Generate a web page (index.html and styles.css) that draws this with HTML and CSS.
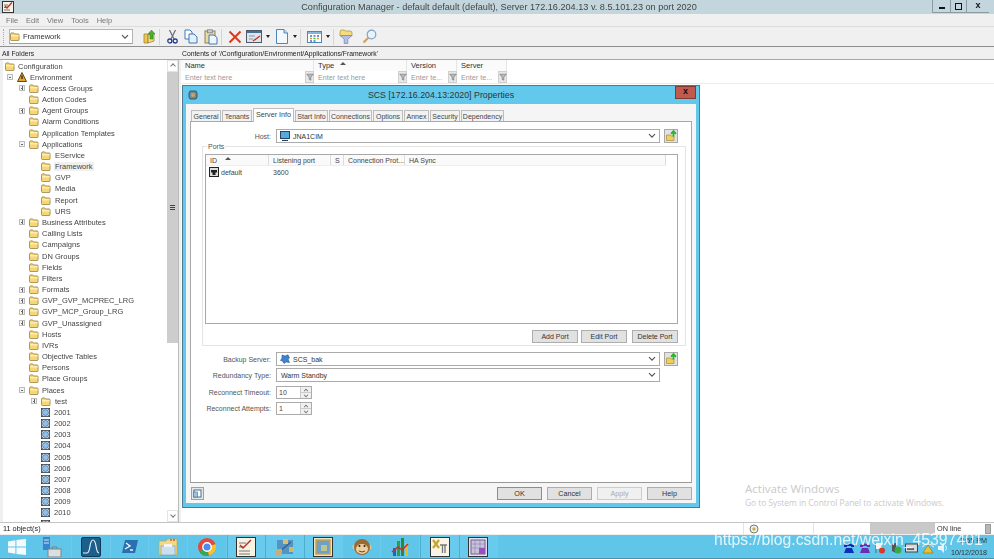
FILE: index.html
```html
<!DOCTYPE html>
<html lang="en">
<head>
<meta charset="utf-8">
<title>Configuration Manager</title>
<link rel="stylesheet" href="styles.css">
</head>
<body>
<svg class="defs" width="0" height="0">
  <defs>
    <symbol id="folder" viewBox="0 0 11 10">
      <path d="M.5 2.5 Q.5 1 2 1 H4 L5 2.2 H9 Q10 2.2 10 3.2 V8.5 Q10 9.5 9 9.5 H2 Q.5 9.5 .5 8.5 Z" fill="#f7d774" stroke="#8a7436" stroke-width=".8"/>
      <path d="M1.2 4.2 H9.6" stroke="#fff3c0" stroke-width="1.4"/>
    </symbol>
    <symbol id="place" viewBox="0 0 10 10">
      <rect x=".5" y=".5" width="9" height="9" fill="#d5dde4" stroke="#45525e"/>
      <circle cx="5" cy="5" r="3.3" fill="#8fc0ea" stroke="#3f6d96" stroke-width=".7"/>
      <path d="M0 0 L2 2 M10 0 L8 2 M0 10 L2 8 M10 10 L8 8" stroke="#333" stroke-width=".8"/>
    </symbol>
    <symbol id="funnel" viewBox="0 0 10 10">
      <path d="M1 1.5 H9 L6 5.2 V9 L4 8 V5.2 Z" fill="#b8bcc0" stroke="#666" stroke-width=".7"/>
    </symbol>
    <symbol id="newfolder" viewBox="0 0 14 14">
      <rect x=".5" y=".5" width="13" height="13" fill="#e3e3e3" stroke="#a8a8a8"/>
      <path d="M2.5 6 H6 L7 7 H10 V11.5 H2.5 Z" fill="#f3cf55" stroke="#96802f" stroke-width=".6"/>
      <path d="M9.5 2 V7.5 M7 4.8 L9.5 2 L12 4.8" fill="none" stroke="#27b531" stroke-width="1.8"/>
    </symbol>
    <symbol id="chev" viewBox="0 0 8 6">
      <path d="M1 1.2 L4 4.2 L7 1.2" fill="none" stroke="#555" stroke-width="1.2"/>
    </symbol>
  </defs>
</svg>

<div class="app">
  <header class="titlebar">
    <svg class="app-icon" width="12" height="12" viewBox="0 0 12 12"><rect x=".5" y=".5" width="11" height="11" fill="#f6f3e6" stroke="#333"/><path d="M2 4 H6 M2 6.5 H5 M2 9 H8" stroke="#777"/><path d="M3 5 L5 7 L10 1.5" fill="none" stroke="#b8322a" stroke-width="1.3"/></svg>
    <div class="title">Configuration Manager - default default (default), Server 172.16.204.13 v. 8.5.101.23 on port 2020</div>
    <div class="winctl">
      <span class="winbtn min"><i></i></span>
      <span class="winbtn max"><i></i></span>
      <span class="winbtn close">x</span>
    </div>
  </header>

  <nav class="menubar"><span>File</span><span>Edit</span><span>View</span><span>Tools</span><span>Help</span></nav>

  <div class="toolbar">
    <span class="grip"></span>
    <div class="combo tb-combo">
      <svg width="10" height="9"><use href="#folder"/></svg>
      <span class="combo-text">Framework</span>
      <svg class="chev" width="8" height="6"><use href="#chev"/></svg>
    </div>
    <svg class="tb t-up" width="13" height="15" viewBox="0 0 13 15"><path d="M1 5 H5 V14 H1 Z" fill="#f0c850" stroke="#8d7530" stroke-width=".7"/><path d="M5 6 L11 4 V12 L5 14 Z" fill="#f8dc78" stroke="#8d7530" stroke-width=".7"/><path d="M8.5 1 L12 5 H10 V10 H7 V5 H5 Z" fill="#4fae2c" stroke="#2f7c18" stroke-width=".5"/></svg>
    <i class="sep s1"></i>
    <svg class="tb t-cut" width="11" height="15" viewBox="0 0 11 15"><path d="M2.5 1 L7 10 M8.5 1 L4 10" stroke="#6d7379" stroke-width="1.3"/><circle cx="2.8" cy="12" r="2" fill="none" stroke="#24408a" stroke-width="1.3"/><circle cx="8.2" cy="12" r="2" fill="none" stroke="#24408a" stroke-width="1.3"/></svg>
    <svg class="tb t-copy" width="14" height="15" viewBox="0 0 14 15"><path d="M1 1 H6 L8 3 V10 H1 Z" fill="#fff" stroke="#3f78b5"/><path d="M5 5 H10 L13 8 V14 H5 Z" fill="#e4f0fa" stroke="#3f78b5"/></svg>
    <svg class="tb t-paste" width="14" height="16" viewBox="0 0 14 16"><rect x="1" y="2" width="10" height="12" fill="#ead9a9" stroke="#8d8152"/><rect x="3.5" y=".8" width="5" height="3" fill="#ccc" stroke="#777" stroke-width=".7"/><path d="M5 6 H10 L13 8.5 V15 H5 Z" fill="#eef5fb" stroke="#3f78b5"/></svg>
    <i class="sep s2"></i>
    <svg class="tb t-x" width="14" height="14" viewBox="0 0 14 14"><path d="M1.5 1.5 L12.5 12.5 M12.5 1.5 L1.5 12.5" stroke="#dd3a1e" stroke-width="2"/></svg>
    <svg class="tb t-prop" width="16" height="13" viewBox="0 0 16 13"><rect x=".5" y=".5" width="15" height="12" fill="#dfe4ea" stroke="#4a5a6a"/><rect x="1" y="1" width="14" height="2" fill="#4a6f95"/><path d="M3 6 H9 M3 9 H7" stroke="#8899aa"/><path d="M7 11 L14 6" stroke="#c9352a" stroke-width="1.4"/></svg>
    <i class="drop d1"></i>
    <svg class="tb t-doc" width="12" height="15" viewBox="0 0 12 15"><path d="M.5 .5 H8 L11.5 4 V14.5 H.5 Z" fill="#f3f8fd" stroke="#4b86bd"/><path d="M8 .5 V4 H11.5" fill="#cfe2f3" stroke="#4b86bd"/></svg>
    <i class="drop d2"></i>
    <i class="sep s3"></i>
    <svg class="tb t-view" width="15" height="12" viewBox="0 0 15 12"><rect x=".5" y=".5" width="14" height="11" fill="#fff" stroke="#4b86bd"/><rect x="1" y="1" width="13" height="2" fill="#8ab4dc"/><path d="M3 5 H5 M6.5 5 H8.5 M10 5 H12" stroke="#3f78b5" stroke-width="1.4"/><path d="M3 7.5 H5 M10 7.5 H12" stroke="#dd9a2c" stroke-width="1.4"/><path d="M6.5 7.5 H8.5" stroke="#4fae2c" stroke-width="1.4"/><path d="M3 10 H5 M6.5 10 H8.5" stroke="#3f78b5" stroke-width="1.4"/></svg>
    <i class="drop d3"></i>
    <i class="sep s4"></i>
    <svg class="tb t-filter" width="14" height="15" viewBox="0 0 14 15"><path d="M1 3 Q1 1 3 1 H5.500 L6.500 2 H11 Q13 2 13 4 V7 H1 Z" fill="#f6dc7c" stroke="#a58f3c" stroke-width=".7"/><path d="M1.500 6.500 H12.500 L8.800 10.500 V14.500 H5.200 V10.500 Z" fill="#b4bfea" stroke="#7283b0" stroke-width=".7"/></svg>
    <svg class="tb t-find" width="15" height="15" viewBox="0 0 15 15"><circle cx="9.5" cy="5.5" r="4.3" fill="#e8f3fb" stroke="#77a8cf" stroke-width="1.2"/><path d="M6.3 8.7 L1.5 13.5" stroke="#d0a260" stroke-width="2.2"/></svg>
  </div>

  <div class="captions">
    <div class="cap-left">All Folders</div>
    <div class="cap-right">Contents of '/Configuration/Environment/Applications/Framework'</div>
  </div>

  <main class="workspace">
    <section class="tree-pane">
      <ul class="tree">
        <li class="l0"><i class="noexp"></i><svg class="ico" width="10" height="9"><use href="#folder"/></svg><span>Configuration</span></li>
        <li class="l1"><i class="exp minus"></i><svg class="ico" width="10" height="10" viewBox="0 0 10 10"><path d="M5 .5 L9.5 9.5 H.5 Z" fill="#e9a324" stroke="#3a2a10" stroke-width=".8"/><path d="M5 3.5 V7" stroke="#222" stroke-width="1.3"/></svg><span>Environment</span></li>
        <li class="l2"><i class="exp plus"></i><svg class="ico" width="10" height="9"><use href="#folder"/></svg><span>Access Groups</span></li>
        <li class="l2"><i class="noexp"></i><svg class="ico" width="10" height="9"><use href="#folder"/></svg><span>Action Codes</span></li>
        <li class="l2"><i class="exp plus"></i><svg class="ico" width="10" height="9"><use href="#folder"/></svg><span>Agent Groups</span></li>
        <li class="l2"><i class="noexp"></i><svg class="ico" width="10" height="9"><use href="#folder"/></svg><span>Alarm Conditions</span></li>
        <li class="l2"><i class="noexp"></i><svg class="ico" width="10" height="9"><use href="#folder"/></svg><span>Application Templates</span></li>
        <li class="l2"><i class="exp minus"></i><svg class="ico" width="10" height="9"><use href="#folder"/></svg><span>Applications</span></li>
        <li class="l3"><i class="noexp"></i><svg class="ico" width="10" height="9"><use href="#folder"/></svg><span>EService</span></li>
        <li class="l3"><i class="noexp"></i><svg class="ico" width="10" height="9"><use href="#folder"/></svg><span class="selected">Framework</span></li>
        <li class="l3"><i class="noexp"></i><svg class="ico" width="10" height="9"><use href="#folder"/></svg><span>GVP</span></li>
        <li class="l3"><i class="noexp"></i><svg class="ico" width="10" height="9"><use href="#folder"/></svg><span>Media</span></li>
        <li class="l3"><i class="noexp"></i><svg class="ico" width="10" height="9"><use href="#folder"/></svg><span>Report</span></li>
        <li class="l3"><i class="noexp"></i><svg class="ico" width="10" height="9"><use href="#folder"/></svg><span>URS</span></li>
        <li class="l2"><i class="exp plus"></i><svg class="ico" width="10" height="9"><use href="#folder"/></svg><span>Business Attributes</span></li>
        <li class="l2"><i class="noexp"></i><svg class="ico" width="10" height="9"><use href="#folder"/></svg><span>Calling Lists</span></li>
        <li class="l2"><i class="noexp"></i><svg class="ico" width="10" height="9"><use href="#folder"/></svg><span>Campaigns</span></li>
        <li class="l2"><i class="noexp"></i><svg class="ico" width="10" height="9"><use href="#folder"/></svg><span>DN Groups</span></li>
        <li class="l2"><i class="noexp"></i><svg class="ico" width="10" height="9"><use href="#folder"/></svg><span>Fields</span></li>
        <li class="l2"><i class="noexp"></i><svg class="ico" width="10" height="9"><use href="#folder"/></svg><span>Filters</span></li>
        <li class="l2"><i class="exp plus"></i><svg class="ico" width="10" height="9"><use href="#folder"/></svg><span>Formats</span></li>
        <li class="l2"><i class="exp plus"></i><svg class="ico" width="10" height="9"><use href="#folder"/></svg><span>GVP_GVP_MCPREC_LRG</span></li>
        <li class="l2"><i class="exp plus"></i><svg class="ico" width="10" height="9"><use href="#folder"/></svg><span>GVP_MCP_Group_LRG</span></li>
        <li class="l2"><i class="exp plus"></i><svg class="ico" width="10" height="9"><use href="#folder"/></svg><span>GVP_Unassigned</span></li>
        <li class="l2"><i class="noexp"></i><svg class="ico" width="10" height="9"><use href="#folder"/></svg><span>Hosts</span></li>
        <li class="l2"><i class="noexp"></i><svg class="ico" width="10" height="9"><use href="#folder"/></svg><span>IVRs</span></li>
        <li class="l2"><i class="noexp"></i><svg class="ico" width="10" height="9"><use href="#folder"/></svg><span>Objective Tables</span></li>
        <li class="l2"><i class="noexp"></i><svg class="ico" width="10" height="9"><use href="#folder"/></svg><span>Persons</span></li>
        <li class="l2"><i class="noexp"></i><svg class="ico" width="10" height="9"><use href="#folder"/></svg><span>Place Groups</span></li>
        <li class="l2"><i class="exp minus"></i><svg class="ico" width="10" height="9"><use href="#folder"/></svg><span>Places</span></li>
        <li class="l3"><i class="exp plus"></i><svg class="ico" width="10" height="9"><use href="#folder"/></svg><span>test</span></li>
        <li class="l3"><i class="noexp"></i><svg class="ico" width="9" height="9"><use href="#place"/></svg><span>2001</span></li>
        <li class="l3"><i class="noexp"></i><svg class="ico" width="9" height="9"><use href="#place"/></svg><span>2002</span></li>
        <li class="l3"><i class="noexp"></i><svg class="ico" width="9" height="9"><use href="#place"/></svg><span>2003</span></li>
        <li class="l3"><i class="noexp"></i><svg class="ico" width="9" height="9"><use href="#place"/></svg><span>2004</span></li>
        <li class="l3"><i class="noexp"></i><svg class="ico" width="9" height="9"><use href="#place"/></svg><span>2005</span></li>
        <li class="l3"><i class="noexp"></i><svg class="ico" width="9" height="9"><use href="#place"/></svg><span>2006</span></li>
        <li class="l3"><i class="noexp"></i><svg class="ico" width="9" height="9"><use href="#place"/></svg><span>2007</span></li>
        <li class="l3"><i class="noexp"></i><svg class="ico" width="9" height="9"><use href="#place"/></svg><span>2008</span></li>
        <li class="l3"><i class="noexp"></i><svg class="ico" width="9" height="9"><use href="#place"/></svg><span>2009</span></li>
        <li class="l3"><i class="noexp"></i><svg class="ico" width="9" height="9"><use href="#place"/></svg><span>2010</span></li>
        <li class="l3"><i class="noexp"></i><svg class="ico" width="9" height="9"><use href="#place"/></svg></li>
      </ul>
      <div class="vscroll">
        <span class="arrow up"></span>
        <div class="thumb"><i></i></div>
        <div class="track"></div>
        <span class="arrow down"></span>
      </div>
    </section>
    <section class="list-pane">
      <div class="col-heads">
        <div class="ch c-name">Name</div>
        <div class="ch c-type">Type<i class="sort"></i></div>
        <div class="ch c-ver">Version</div>
        <div class="ch c-srv">Server</div>
      </div>
      <div class="col-filters">
        <div class="cf c-name"><span>Enter text here</span><b><svg width="8" height="8"><use href="#funnel"/></svg></b></div>
        <div class="cf c-type"><span>Enter text here</span><b><svg width="8" height="8"><use href="#funnel"/></svg></b></div>
        <div class="cf c-ver"><span>Enter te...</span><b><svg width="8" height="8"><use href="#funnel"/></svg></b></div>
        <div class="cf c-srv"><span>Enter te...</span><b><svg width="8" height="8"><use href="#funnel"/></svg></b></div>
      </div>
      <div class="activate">
        <div class="act-1">Activate Windows</div>
        <div class="act-2">Go to System in Control Panel to activate Windows.</div>
      </div>
    </section>

    <div class="dialog">
      <div class="dlg-title">
        <svg class="dlg-icon" width="10" height="10" viewBox="0 0 10 10"><path d="M2 1 H8 L9 3 V7 L8 9 H2 L1 7 V3 Z" fill="#6d8aa5" stroke="#2f3f50" stroke-width=".8"/><circle cx="5" cy="5" r="2" fill="#c8a94c"/></svg>
        <div class="dlg-name">SCS [172.16.204.13:2020] Properties</div>
        <div class="dlg-close">x</div>
      </div>
      <div class="dlg-body">
        <div class="tabs">
          <span class="tab t-general">General</span>
          <span class="tab t-tenants">Tenants</span>
          <span class="tab active t-server">Server Info</span>
          <span class="tab t-start">Start Info</span>
          <span class="tab t-conn">Connections</span>
          <span class="tab t-opt">Options</span>
          <span class="tab t-annex">Annex</span>
          <span class="tab t-sec">Security</span>
          <span class="tab t-dep">Dependency</span>
        </div>
        <div class="pane">
          <div class="frow host-row">
            <label class="flabel">Host:</label>
            <div class="combo fcombo">
              <svg width="10" height="10" viewBox="0 0 10 10"><rect x=".5" y=".5" width="9" height="7" fill="#5aa6de" stroke="#26435f"/><path d="M2 9.5 H8" stroke="#26435f" stroke-width="1.2"/></svg>
              <span class="combo-text">JNA1CIM</span>
              <svg class="chev" width="8" height="6"><use href="#chev"/></svg>
            </div>
            <svg class="addbtn" width="14" height="14"><use href="#newfolder"/></svg>
          </div>

          <div class="group">
            <span class="legend">Ports</span>
            <div class="ports">
              <div class="phead">
                <div class="pc p-id">ID<i class="sort"></i></div>
                <div class="pc p-port">Listening port</div>
                <div class="pc p-s">S</div>
                <div class="pc p-conn">Connection Prot...</div>
                <div class="pc p-ha">HA Sync</div>
              </div>
              <div class="prow">
                <div class="p-id cell-id">
                  <svg width="10" height="10" viewBox="0 0 10 10"><rect x=".5" y=".5" width="9" height="9" fill="#ddd" stroke="#222"/><path d="M2 3 H8 V5.5 H6.5 V8 H3.5 V5.5 H2 Z" fill="#222"/></svg>
                  <span>default</span>
                </div>
                <div class="p-port cell-port">3600</div>
              </div>
            </div>
            <div class="port-btns">
              <button class="btn b-add">Add Port</button>
              <button class="btn b-edit">Edit Port</button>
              <button class="btn b-del">Delete Port</button>
            </div>
          </div>

          <div class="frow backup-row">
            <label class="flabel">Backup Server:</label>
            <div class="combo fcombo">
              <svg width="10" height="10" viewBox="0 0 10 10"><path d="M2 1 L5 2 L8 .8 L9.5 4 L8 5 L9.5 8.5 L6 8 L4 9.5 L2.5 7 L.5 6.5 L2 4 Z" fill="#3f83d0" stroke="#23466f" stroke-width=".5"/></svg>
              <span class="combo-text">SCS_bak</span>
              <svg class="chev" width="8" height="6"><use href="#chev"/></svg>
            </div>
            <svg class="addbtn" width="14" height="14"><use href="#newfolder"/></svg>
          </div>
          <div class="frow red-row">
            <label class="flabel">Redundancy Type:</label>
            <div class="combo fcombo">
              <span class="combo-text plain">Warm Standby</span>
              <svg class="chev" width="8" height="6"><use href="#chev"/></svg>
            </div>
          </div>
          <div class="frow spin-row s-first">
            <label class="flabel">Reconnect Timeout:</label>
            <div class="spin"><span class="spin-val">10</span><span class="spin-btns"><i class="sup"></i><i class="sdn"></i></span></div>
          </div>
          <div class="frow spin-row">
            <label class="flabel">Reconnect Attempts:</label>
            <div class="spin"><span class="spin-val">1</span><span class="spin-btns"><i class="sup"></i><i class="sdn"></i></span></div>
          </div>
        </div>
        <div class="dlg-foot">
          <svg class="foot-icon" width="13" height="13" viewBox="0 0 13 13"><rect x=".5" y=".5" width="12" height="12" fill="#e6e6e6" stroke="#8aa"/><rect x="3" y="3" width="7" height="7" fill="#fff" stroke="#3f6d96"/><rect x="2.5" y="5" width="4" height="5" fill="#9cc3e6" stroke="#3f6d96" stroke-width=".6"/></svg>
          <button class="btn fbtn default">OK</button>
          <button class="btn fbtn">Cancel</button>
          <button class="btn fbtn disabled">Apply</button>
          <button class="btn fbtn">Help</button>
        </div>
      </div>
    </div>
  </main>

  <footer class="statusbar">
    <div class="st-text">11 object(s)</div>
    <div class="st-seg st-a"><svg width="10" height="10" viewBox="0 0 10 10"><circle cx="5" cy="5" r="4" fill="#f3f3ea" stroke="#777"/><circle cx="5" cy="5" r="1.7" fill="#c3b150"/></svg></div>
    <div class="st-seg st-b"></div>
    <div class="st-gray"></div>
    <div class="st-online">ON line</div>
    <div class="st-end"></div>
  </footer>

  <footer class="taskbar">
    <span class="tk start"><svg width="18" height="16" viewBox="0 0 18 16"><path d="M0 2.4 L7.4 1.3 V7.5 H0 Z M8.4 1.1 L18 0 V7.5 H8.4 Z M0 8.5 H7.4 V14.7 L0 13.6 Z M8.4 8.5 H18 V16 L8.4 14.9 Z" fill="#f4fbfe"/></svg></span>
    <span class="tk"><svg width="20" height="20" viewBox="0 0 20 20"><rect x="1" y="0" width="7" height="13" fill="#3a84cf"/><path d="M2 3 H7 M2 6 H7" stroke="#cfe6f8"/><rect x="6" y="12" width="13" height="8" fill="#dcdfe2" stroke="#7a8288"/><path d="M10 12 V10 H15 V12" fill="none" stroke="#7a8288"/></svg></span>
    <span class="tk"><svg width="20" height="20" viewBox="0 0 20 20"><rect x=".5" y=".5" width="19" height="19" rx="1.5" fill="#1c5f8c" stroke="#123a58"/><path d="M2 16 H6 Q8 16 9 9 Q10 3 12 3 Q14 3 15 9 Q16 16 18 16" fill="none" stroke="#e3f2f9" stroke-width="1.2"/></svg></span>
    <span class="tk"><svg width="18" height="15" viewBox="0 0 18 15"><path d="M4 1 H17 L14 14 H1 Z" fill="#2a6fb0"/><path d="M5 4 L9 7 L4 10 M9 11 H12" fill="none" stroke="#eef7fd" stroke-width="1.4"/></svg></span>
    <span class="tk"><svg width="20" height="18" viewBox="0 0 20 18"><path d="M1 3 H8 L9.5 1 H19 V17 H1 Z" fill="#f4d77f" stroke="#b59a4b" stroke-width=".6"/><path d="M12 2 H14 M15 2 H17" stroke="#dd5040" stroke-width="1.4"/><rect x="3" y="8" width="14" height="9" fill="#c9e0ee" stroke="#7a99ad" stroke-width=".6"/><rect x="6" y="6" width="8" height="3" fill="#f4f4f4"/></svg></span>
    <span class="tk"><svg width="18" height="18" viewBox="0 0 18 18"><circle cx="9" cy="9" r="9" fill="#e24a3b"/><path d="M9 9 L1.2 13.5 A9 9 0 0 0 11 17.8 Z" fill="#34a853"/><path d="M9 9 L17.5 6 A9 9 0 0 1 11 17.8 Z" fill="#fbc02d"/><circle cx="9" cy="9" r="4.2" fill="#4a8df0" stroke="#fff" stroke-width="1.4"/></svg></span>
    <span class="tk boxed"><svg width="20" height="20" viewBox="0 0 20 20"><rect x=".5" y=".5" width="19" height="19" fill="#f7f3e3" stroke="#33302a"/><path d="M3 6 H10 M3 10 H8 M3 14 H14 M3 17 H14" stroke="#777"/><path d="M4 8 L7 11 L15 3" fill="none" stroke="#b8322a" stroke-width="1.5"/></svg></span>
    <span class="tk boxed"><svg width="18" height="18" viewBox="0 0 18 18"><rect x="1" y="2" width="16" height="14" fill="#4f86b8" opacity=".8"/><path d="M3 14 L9 9 L15 4" stroke="#3d5f7a" stroke-width="1.2"/><rect x="7" y="1" width="5" height="5" fill="#d8c078"/><rect x="0" y="11" width="6" height="6" fill="#c3b078"/><rect x="13" y="9" width="5" height="5" fill="#cfb86a"/></svg></span>
    <span class="tk boxed"><svg width="20" height="20" viewBox="0 0 20 20"><rect x=".5" y=".5" width="19" height="19" fill="#f1e5c0" stroke="#333"/><rect x="3" y="3" width="14" height="14" fill="#6f9fcb" stroke="#c9a24a" stroke-width="1.5"/><rect x="8" y="8" width="6" height="6" fill="#b7c98a"/></svg></span>
    <span class="tk"><svg width="20" height="18" viewBox="0 0 20 18"><circle cx="3" cy="9" r="2.5" fill="#e8c28e"/><circle cx="17" cy="9" r="2.5" fill="#e8c28e"/><circle cx="10" cy="9" r="8" fill="#9a6a34"/><ellipse cx="10" cy="11" rx="6" ry="5" fill="#efcfa0"/><circle cx="7.5" cy="8" r="1" fill="#222"/><circle cx="12.5" cy="8" r="1" fill="#222"/><path d="M7 13 Q10 15 13 13" fill="none" stroke="#6b4420"/></svg></span>
    <span class="tk"><svg width="18" height="20" viewBox="0 0 18 20"><rect x="2" y="11" width="3" height="8" fill="#2a5fc0"/><rect x="6" y="4" width="3" height="15" fill="#2f9e44"/><rect x="10" y="1" width="3" height="18" fill="#2c8a3a"/><rect x="14" y="6" width="3" height="13" fill="#e7b92c"/><path d="M1 15 L7 10 L11 13 L17 7" fill="none" stroke="#d22a25" stroke-width="1.5"/></svg></span>
    <span class="tk boxed"><svg width="20" height="20" viewBox="0 0 20 20"><rect x=".5" y=".5" width="19" height="19" fill="#f8f4e6" stroke="#333"/><path d="M3 3 L9 11 M9 3 L3 11" stroke="#c9a52c" stroke-width="2.2"/><path d="M10 8 H17 M12.5 8 V16 M15 8 V16" stroke="#777" stroke-width="1.3"/></svg></span>
    <span class="tk boxed"><svg width="20" height="20" viewBox="0 0 20 20"><rect x=".5" y=".5" width="19" height="19" fill="#e4e0ee" stroke="#333"/><rect x="3" y="3" width="14" height="14" fill="#c9c3dc" stroke="#6b6290"/><path d="M3 7 H17 M3 11 H17 M7 3 V17 M12 3 V17" stroke="#8f86b0" stroke-width=".7"/><rect x="11" y="11" width="6" height="6" fill="#9a4fc0"/></svg></span>
    <div class="tray">
      <svg width="12" height="12" viewBox="0 0 12 12"><path d="M1 3 Q6 0 11 3 V5 H8 V4 H4 V5 H1 Z M3 6 H9 L11 11 H1 Z" fill="#0e2fb8"/></svg>
      <svg width="12" height="12" viewBox="0 0 12 12"><path d="M1 3 Q6 0 11 3 V5 H8 V4 H4 V5 H1 Z M3 6 H9 L11 11 H1 Z" fill="#6a2fb5"/></svg>
      <svg width="12" height="12" viewBox="0 0 12 12"><path d="M2 1 V11" stroke="#666"/><path d="M2 1 H9 L7 4 L9 7 H2 Z" fill="#f3f3f3"/><circle cx="8" cy="8.5" r="3" fill="#d53a2c"/></svg>
      <svg width="12" height="12" viewBox="0 0 12 12"><path d="M2 2 L6 1 V11 L2 9 Z" fill="#555"/><circle cx="8" cy="8" r="3.5" fill="#39a845"/></svg>
      <svg width="13" height="12" viewBox="0 0 13 12"><rect x=".5" y="2" width="12" height="8" fill="#d6dadd" stroke="#444"/><path d="M2 7 H9" stroke="#333" stroke-width="1.4"/></svg>
      <svg width="12" height="12" viewBox="0 0 12 12"><path d="M0 5 Q6 -1 12 5" fill="none" stroke="#e3f3fa"/><path d="M6 3 L11 11 H1 Z" fill="#edc132" stroke="#7a6010" stroke-width=".5"/></svg>
      <svg width="12" height="12" viewBox="0 0 12 12"><path d="M1 4 H4 L7 1 V11 L4 8 H1 Z" fill="#e3f3fa"/><path d="M8.5 3.5 Q10.5 6 8.5 8.5" fill="none" stroke="#e3f3fa"/></svg>
    </div>
    <div class="clock"><div>2:55 PM</div><div>10/12/2018</div></div>
    <div class="watermark">https://blog.csdn.net/weixin_45397401</div>
  </footer>
</div>
</body>
</html>
```
FILE: styles.css
```css
* { box-sizing: border-box; }
html, body { margin: 0; padding: 0; height: 100%; }
body { background: #fff; overflow: hidden; font-family: "Liberation Sans", Arial, sans-serif; font-size: 7.5px; color: #333; }
.defs { position: absolute; }
button { font-family: inherit; }

.app { width: 994px; height: 559px; display: flex; flex-direction: column; position: relative; filter: blur(.45px); }

/* title */
.titlebar { height: 14px; background: #c3d6dd; display: flex; align-items: center; position: relative; flex: none; }
.app-icon { margin-left: 2px; flex: none; }
.title { position: absolute; left: 0; right: 0; padding-left: 4px; text-align: center; font-size: 9.15px; color: #444; white-space: nowrap; }
.winctl { margin-left: auto; margin-right: 5px; display: flex; height: 13px; align-self: flex-start; border: 1px solid #8a9ba2; border-top: 0; border-right: 0; position: relative; }
.winbtn { display: flex; align-items: center; justify-content: center; font-size: 9px; font-weight: 700; color: #111; }
.winbtn.min { width: 18px; border-right: 1px solid #8a9ba2; }
.winbtn.min i { width: 6px; height: 2px; background: #111; margin-top: 4px; }
.winbtn.max { width: 16px; border-right: 1px solid #8a9ba2; }
.winbtn.max i { width: 7px; height: 7px; border: 1.5px solid #111; }
.winbtn.close { width: 22px; padding-bottom: 3px; }

/* menu */
.menubar { height: 13px; background: #f0f0f0; border-bottom: 1px solid #dcdcdc; display: flex; flex: none; gap: 8px; padding-left: 6px; align-items: center; color: #777; font-size: 7.5px; }

/* toolbar */
.toolbar { height: 20px; background: #f0f0f0; border-bottom: 1px solid #8f8f8f; display: flex; align-items: center; flex: none; position: relative; padding-left: 3px; }
.grip { width: 2px; height: 16px; border-left: 1px dotted #aaa; flex: none; }
.combo { display: flex; align-items: center; background: #fff; border: 1px solid #b4b4b4; border-bottom-color: #a0a0a0; color: #333; }
.tb-combo { margin-left: 4px; width: 124px; height: 15px; padding: 0 3px 0 0; }
.combo-text { margin-left: 3px; }
.combo-text.plain { margin-left: 1px; }
.chev { margin-left: auto; flex: none; }
.tb { flex: none; }
.t-up { margin-left: 10px; }
.sep { width: 1px; height: 16px; background: #d4d4d4; flex: none; }
.s1 { margin-left: 3px; }
.t-cut { margin-left: 7px; }
.t-copy { margin-left: 6px; }
.t-paste { margin-left: 6px; }
.s2 { margin-left: 3px; }
.t-x { margin-left: 6px; }
.t-prop { margin-left: 4px; }
.drop { width: 0; height: 0; border: 2.5px solid transparent; border-top: 3px solid #222; border-bottom: 0; flex: none; }
.d1 { margin-left: 4px; }
.t-doc { margin-left: 6px; }
.d2 { margin-left: 5px; }
.s3 { margin-left: 3px; }
.t-view { margin-left: 6px; }
.d3 { margin-left: 4px; }
.s4 { margin-left: 3px; }
.t-filter { margin-left: 5px; }
.t-find { margin-left: 9px; }

/* captions */
.captions { height: 13px; background: #f0f0f0; border-bottom: 1px solid #a8a8a8; display: flex; flex: none; align-items: center; color: #222; font-size: 6.8px; }
.cap-left { width: 182px; padding-left: 2px; }

/* workspace */
.workspace { flex: 1; display: flex; position: relative; min-height: 0; background: #f0f0f0; }
.tree-pane { width: 176px; margin-left: 3px; background: #fff; display: flex; border-right: 1px solid #bbb; flex: none; overflow: hidden; }
.tree { list-style: none; margin: 0; padding: 0; flex: 1; display: grid; grid-auto-rows: 11.175px; align-content: start; color: #444; padding-top: .5px; }
.tree li { display: flex; align-items: center; white-space: nowrap; }
.tree .l0 { padding-left: 2px; }
.tree .l1 { padding-left: 4px; }
.tree .l2 { padding-left: 16px; }
.tree .l3 { padding-left: 28px; }
.exp, .noexp { width: 6px; height: 6px; flex: none; margin-right: 4px; position: relative; }
.l0 .noexp { width: 0; margin: 0; }
.exp { border: 1px solid #bbb; background: #f4f4f4; }
.exp::before { content: ""; position: absolute; left: 1px; right: 1px; top: 1.5px; height: 1px; background: #666; }
.plus::after { content: ""; position: absolute; top: 0; bottom: 0; left: 1.5px; width: 1px; background: #666; }
.ico { flex: none; margin-right: 3px; }
.l3 .ico { margin-right: 4px; }
.selected { background: #f0f0f0; padding: 0 1px; margin-left: -1px; }
.vscroll { width: 11px; background: #fff; display: flex; flex-direction: column; flex: none; }
.arrow { height: 12px; background: #fff; border: 1px solid #e4e4e4; position: relative; flex: none; }
.arrow::before { content: ""; position: absolute; left: 3px; top: 3px; width: 3px; height: 3px; border-left: 1px solid #777; border-top: 1px solid #777; transform: rotate(45deg); }
.arrow.down::before { transform: rotate(225deg); top: 2px; }
.thumb { height: 271px; background: #cdcdcd; display: flex; align-items: center; justify-content: center; flex: none; }
.thumb i { width: 5px; height: 5px; border-top: 1px solid #444; border-bottom: 1px solid #444; position: relative; }
.thumb i::after { content: ""; position: absolute; left: 0; right: 0; top: 1px; height: 1px; background: #444; }
.track { flex: 1; }

.list-pane { flex: 1; margin-left: 2px; background: #fff; position: relative; }
.col-heads { height: 11px; display: flex; color: #333; }
.col-filters { height: 13px; display: flex; background: #fff; color: #999; border-bottom: 1px solid #ececec; }
.c-name { width: 133px; }
.c-type { width: 93px; }
.c-ver { width: 50px; }
.c-srv { width: 50px; }
.ch { background: #fafafa; border-right: 1px solid #e6e6e6; padding-left: 4px; display: flex; align-items: center; position: relative; }
.sort { position: absolute; width: 0; height: 0; border: 3px solid transparent; border-bottom: 3px solid #555; border-top: 0; }
.c-type .sort { left: 26px; top: 2px; }
.cf { display: flex; align-items: center; padding-left: 4px; font-size: 7.2px; }
.cf b { margin-left: auto; width: 9px; height: 12px; background: #e8e8e8; border: 1px solid #cfcfcf; display: flex; align-items: center; justify-content: center; font-weight: 400; }
.cf svg { flex: none; }
.activate { position: absolute; left: 564px; top: 422px; color: #c9c9c9; white-space: nowrap; }
.act-1 { font-size: 11.5px; font-family: "Open Sans", sans-serif; line-height: 14px; }
.act-2 { font-size: 8.4px; font-family: "Open Sans", sans-serif; line-height: 13px; }

/* dialog */
.dialog { position: absolute; left: 182px; top: 25px; width: 518px; height: 423px; background: #62c8ec; border: 1px solid #4a7c92; display: flex; flex-direction: column; padding: 0 3px 4px; }
.dlg-title { height: 18px; position: relative; display: flex; align-items: center; flex: none; }
.dlg-icon { margin-left: 2px; }
.dlg-name { position: absolute; left: 0; right: 0; text-align: center; font-size: 8.8px; color: #333; }
.dlg-close { position: absolute; right: 0; top: 0; width: 21px; height: 13px; background: #c15a4c; border: 1px solid #7e3b33; color: #111; font-weight: 700; font-size: 9px; line-height: 9px; text-align: center; }
.dlg-body { flex: 1; background: #f5f5f5; padding: 5px 4px 0; display: flex; flex-direction: column; min-height: 0; }
.tabs { display: flex; height: 12px; gap: 1px; position: relative; z-index: 1; flex: none; padding-left: 1px; align-items: flex-end; }
.tab { height: 11px; background: #f2f2f2; border: 1px solid #bdbdbd; border-bottom: 0; display: flex; align-items: center; justify-content: center; color: #444; font-size: 7px; white-space: nowrap; }
.tab.active { height: 14px; background: #fff; margin-bottom: -1px; padding-bottom: 2px; font-size: 7.2px; }
.t-general { width: 30px; } .t-tenants { width: 30px; } .t-server { width: 41px; } .t-start { width: 33px; }
.t-conn { width: 43px; } .t-opt { width: 30px; } .t-annex { width: 25px; } .t-sec { width: 30px; } .t-dep { width: 43px; }
.pane { height: 362px; background: #fff; border: 1px solid #a8a8a8; border-bottom-color: #999; flex: none; font-size: 7px; color: #444; }
.frow { display: flex; align-items: center; }
.flabel { width: 80px; text-align: right; margin-right: 5px; flex: none; white-space: nowrap; color: #555; }
.fcombo { width: 384px; height: 14px; padding: 0 3px; border: 1px solid #ababab; }
.addbtn { margin-left: 4px; flex: none; }
.host-row { margin-top: 7px; }
.group { margin: 3px 5px 0 11px; height: 200px; border: 1px solid #e4e4e4; position: relative; padding: 7px 7px 0 2px; }
.legend { position: absolute; left: 4px; top: -5px; background: #fff; padding: 0 1px; color: #555; line-height: 9px; }
.ports { height: 170px; border: 1px solid #a8a8a8; background: #fff; }
.phead { height: 11px; display: flex; background: #fafafa; border-bottom: 1px solid #eee; margin-right: 11px; }
.pc { display: flex; align-items: center; border-right: 1px solid #dcdcdc; padding-left: 4px; white-space: nowrap; position: relative; }
.p-id { width: 63px; }
.p-port { width: 62px; }
.p-s { width: 13px; }
.p-conn { width: 61px; }
.p-ha { flex: 1; }
.pc .sort { left: 19px; top: 2px; }
.prow { display: flex; margin-top: 0; height: 12px; align-items: center; }
.cell-id { display: flex; align-items: center; gap: 2px; padding-left: 3px; }
.cell-port { padding-left: 4px; }
.port-btns { display: flex; margin-top: 6px; justify-content: flex-end; gap: 3px; }
.btn { height: 13px; background: #e1e1e1; border: 1px solid #adadad; font-size: 7px; color: #333; padding: 0; display: block; }
.b-add { width: 46px; }
.b-edit { width: 46px; margin-right: 2px; }
.b-del { width: 46px; }
.backup-row { margin-top: 6px; }
.red-row { margin-top: 2px; }
.spin-row { margin-top: 3px; }
.spin-row.s-first { margin-top: 4px; }
.spin { width: 36px; height: 13px; border: 1px solid #ababab; display: flex; background: #fff; }
.spin-val { flex: 1; padding-left: 2px; line-height: 11px; }
.spin-btns { width: 11px; background: #f0f0f0; border-left: 1px solid #ccc; display: flex; flex-direction: column; }
.spin-btns i { flex: 1; position: relative; }
.sup { border-bottom: 1px solid #ccc; }
.sup::before, .sdn::before { content: ""; position: absolute; left: 3px; top: 2px; width: 3px; height: 3px; border-left: 1px solid #666; border-top: 1px solid #666; transform: rotate(45deg) scale(.8); }
.sdn::before { transform: rotate(225deg) scale(.8); top: 0; }
.dlg-foot { flex: 1; display: flex; align-items: flex-start; padding-top: 4px; gap: 5px; justify-content: flex-end; position: relative; }
.foot-icon { position: absolute; left: 1px; top: 4px; }
.fbtn { width: 45px; height: 13px; font-size: 7.2px; }
.fbtn.default { border-color: #5f9ac0; }
.fbtn.disabled { background: #f0f0f0; color: #aaa; border-color: #ccc; }

/* status */
.statusbar { height: 13px; background: #fff; border-top: 1px solid #c4c4c4; border-bottom: 1px solid #eee; display: flex; align-items: center; flex: none; font-size: 7.3px; color: #222; }
.st-text { width: 743px; padding-left: 3px; white-space: nowrap; }
.st-seg { height: 100%; border-left: 1px solid #e4e4e4; display: flex; align-items: center; flex: none; }
.st-a { width: 70px; padding-left: 5px; }
.st-b { width: 57px; }
.st-gray { width: 65px; height: 100%; background: #c9c9c9; flex: none; }
.st-online { padding-left: 2px; width: 50px; color: #333; }
.st-end { width: 6px; height: 10px; background: #b8b8b8; border: 1px solid #999; }

/* taskbar */
.taskbar { height: 24px; background: #5fc6ea; display: flex; align-items: center; flex: none; position: relative; border-bottom: 1px solid #4d93ad; padding-left: 0; }
.tk { width: 38.7px; height: 23px; display: flex; align-items: center; justify-content: center; flex: none; border-right: 1px solid #6ccbec; }
.tk.start { width: 33.3px; border: 0; }
.tk.boxed { background: #68cbed; border-left: 1px solid #4eaccc; }
.tray { position: absolute; left: 843px; top: 7px; display: flex; gap: 3.5px; }
.clock { position: absolute; right: 7px; top: 0; text-align: right; font-size: 7.2px; color: #333; line-height: 11.5px; white-space: nowrap; }
.watermark { position: absolute; left: 714px; top: -4px; font-size: 15.8px; color: rgba(255,255,255,.82); white-space: nowrap; }
```
